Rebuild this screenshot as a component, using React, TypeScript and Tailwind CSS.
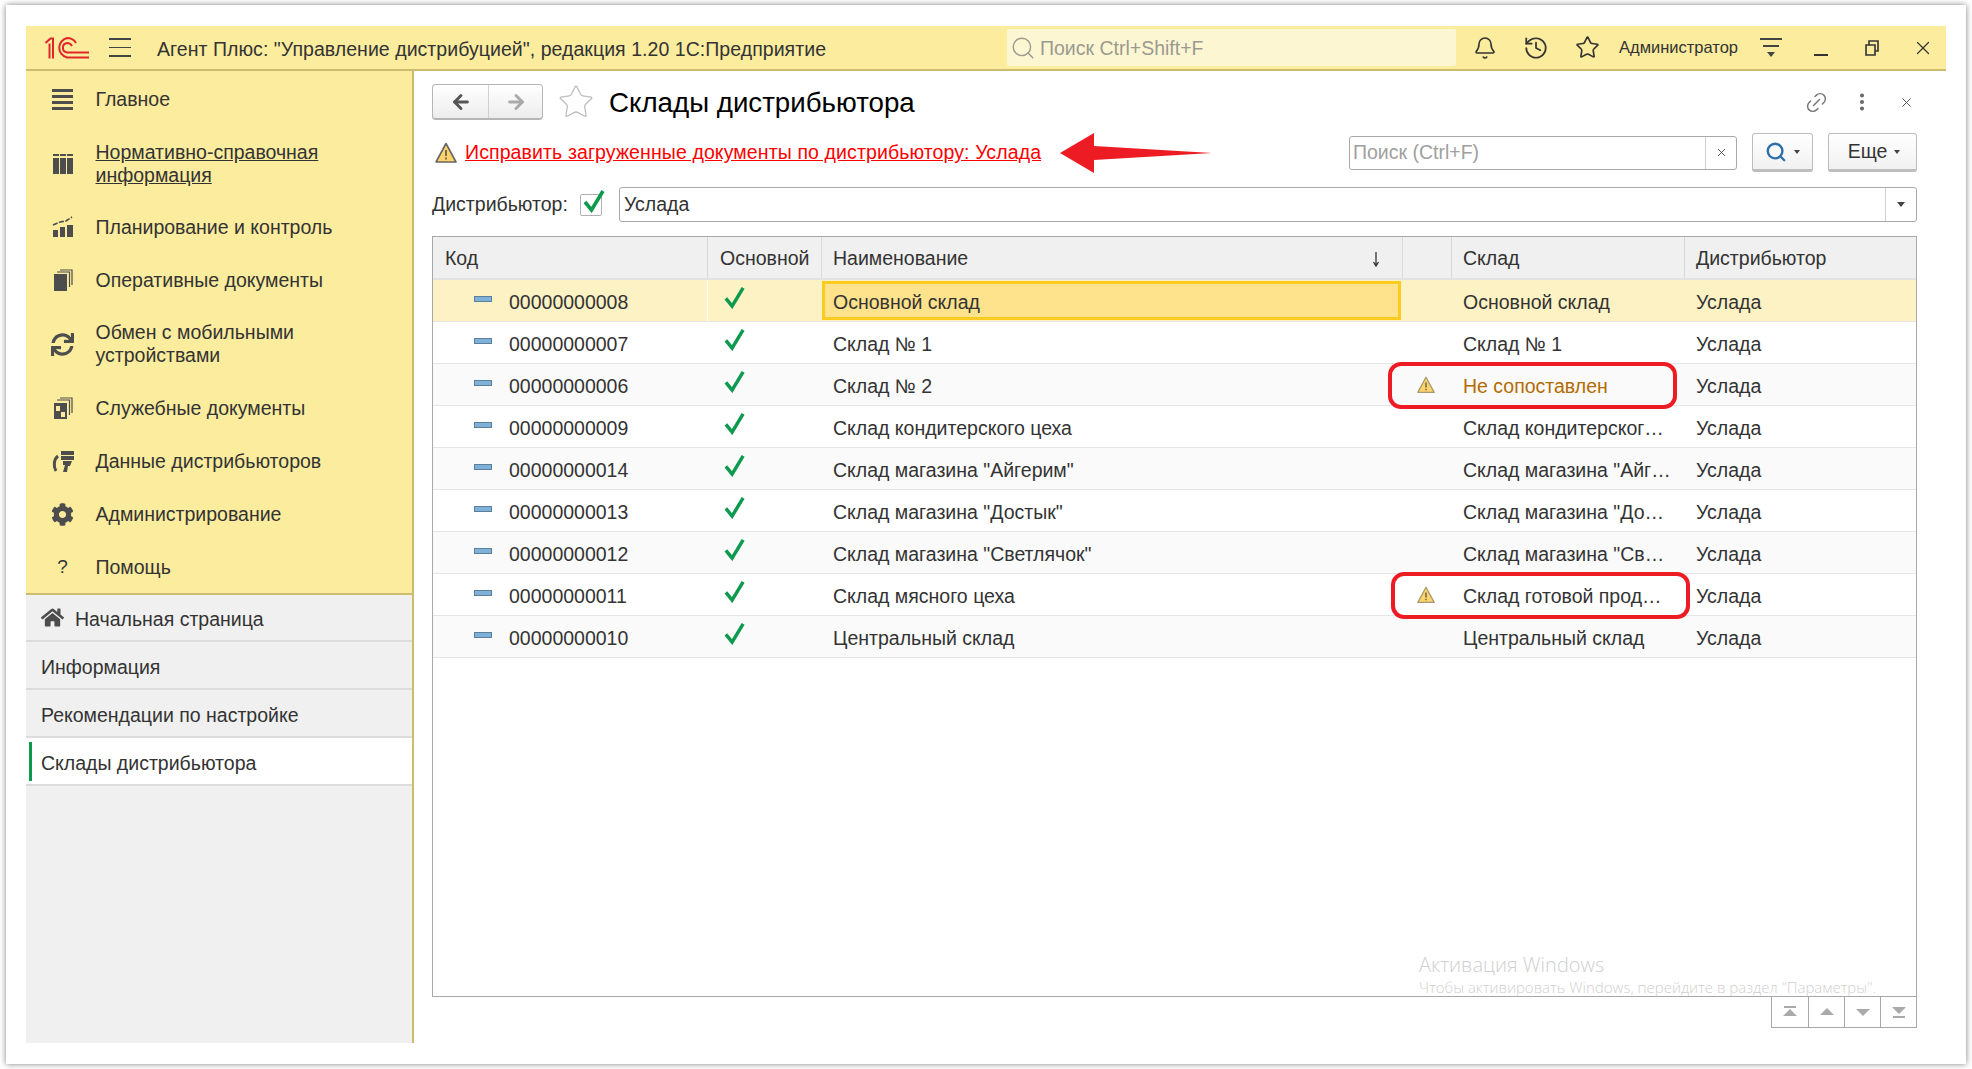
import React from 'react';
import { Bell, History, Star, Link2, X, Search, MoreVertical, ArrowLeft, ArrowRight } from 'lucide-react';
import { FaCog, FaHome, FaSync } from 'react-icons/fa';

const Warn = ({ size = 22, stroke = '#666' }: { size?: number; stroke?: string }) => (
  <svg width={size} height={size} viewBox="0 0 22 22" className="shrink-0">
    <path d="M11 1.5 L21 20 H1 Z" fill="#fdd36a" stroke={stroke} strokeWidth="1.6" strokeLinejoin="round" />
    <path d="M11 8 V14" stroke="#555" strokeWidth="1.6" />
    <path d="M11 15.5 V17.5" stroke="#555" strokeWidth="1.6" />
  </svg>
);

const Logo = () => (
  <svg width="44" height="22" viewBox="0 0 44 22" fill="none" stroke="#e0262b" strokeWidth="2" className="shrink-0">
    <path d="M0.5 6 L5.5 1.5 H8 V21.5 M4.5 21.5 V6.5" />
    <path d="M31 6 C29 2.5 25.5 1 22 1 A10 10 0 0 0 22 20.5 H44" />
    <path d="M27 9 C26 7 24 6 22 6 A4.8 4.8 0 0 0 22 15.5 H44" />
  </svg>
);

const IconMenu = () => (
  <div className="flex flex-col gap-[3px] w-[21px]">
    <div className="h-[3px] bg-[#4d4d4d]" />
    <div className="h-[3px] bg-[#4d4d4d]" />
    <div className="h-[3px] bg-[#4d4d4d]" />
    <div className="h-[3px] bg-[#4d4d4d]" />
  </div>
);

const IconTable = () => (
  <svg width="22" height="22" viewBox="0 0 22 22" fill="#4d4d4d">
    <path d="M1 1h6v2H1zM8 1h6v2H8zM15 1h6v2h-6z" />
    <path d="M1 5h6v16H1zM8 5h6v16H8zM15 5h6v16h-6z" />
  </svg>
);

const IconPlan = () => (
  <svg width="22" height="22" viewBox="0 0 22 22" fill="#4d4d4d">
    <path d="M1 14h5v7H1zM8 11h5v10H8zM15 9h6v12h-6z" />
    <path d="M1 9 L8 6 L14 5 L20 1" fill="none" stroke="#4d4d4d" strokeWidth="1.6" strokeDasharray="5 1.5" />
  </svg>
);

const IconDocs = () => (
  <svg width="20" height="22" viewBox="0 0 20 22" fill="#4d4d4d">
    <path d="M1 5h13v17H1z" />
    <path d="M4 3h12.5v15M7 1h12v15" fill="none" stroke="#4d4d4d" strokeWidth="1.2" />
  </svg>
);

const IconService = () => (
  <svg width="20" height="22" viewBox="0 0 20 22" fill="#4d4d4d">
    <path fillRule="evenodd" d="M1 6h13v16H1z M3 9v5h4V9z M8 15v5h4v-5z" />
    <path d="M4 3h12.5v15M7 1h12v15" fill="none" stroke="#4d4d4d" strokeWidth="1.2" />
  </svg>
);

const IconData = () => (
  <svg width="24" height="24" viewBox="0 0 24 24" fill="#4d4d4d">
    <path d="M10 2h13v4H10zM10 7h13v4H10z" />
    <path d="M12 12h9l-2 5h-2l-1 6h-4l2-7h-2z" />
    <path d="M7 7 C3 10 2 17 5 22" fill="none" stroke="#4d4d4d" strokeWidth="3" />
  </svg>
);

const navItems = [
  { icon: <IconMenu />, label: 'Главное', h: 'h-[54px]' },
  { icon: <IconTable />, label: 'Нормативно-справочная информация', link: true, h: 'h-[74px]' },
  { icon: <IconPlan />, label: 'Планирование и контроль', h: 'h-[53px]' },
  { icon: <IconDocs />, label: 'Оперативные документы', h: 'h-[53px]' },
  { icon: <FaSync size={23} color="#4d4d4d" />, label: 'Обмен с мобильными устройствами', h: 'h-[75px]' },
  { icon: <IconService />, label: 'Служебные документы', h: 'h-[53px]' },
  { icon: <IconData />, label: 'Данные дистрибьюторов', h: 'h-[53px]' },
  { icon: <FaCog size={23} color="#4d4d4d" />, label: 'Администрирование', h: 'h-[53px]' },
  { icon: <span className="text-[#333] text-[19px]">?</span>, label: 'Помощь', h: 'h-[53px]' },
];

const rows = [
  { code: '00000000008', name: 'Основной склад', sklad: 'Основной склад' },
  { code: '00000000007', name: 'Склад № 1', sklad: 'Склад № 1' },
  { code: '00000000006', name: 'Склад № 2', sklad: 'Не сопоставлен', warn: true, bad: true },
  { code: '00000000009', name: 'Склад кондитерского цеха', sklad: 'Склад кондитерског…' },
  { code: '00000000014', name: 'Склад магазина "Айгерим"', sklad: 'Склад магазина "Айг…' },
  { code: '00000000013', name: 'Склад магазина "Достык"', sklad: 'Склад магазина "До…' },
  { code: '00000000012', name: 'Склад магазина "Светлячок"', sklad: 'Склад магазина "Св…' },
  { code: '00000000011', name: 'Склад мясного цеха', sklad: 'Склад готовой прод…', warn: true },
  { code: '00000000010', name: 'Центральный склад', sklad: 'Центральный склад' },
];

const Check = ({ size = 24 }: { size?: number }) => (
  <svg width={size} height={size} viewBox="0 0 24 24" fill="none" stroke="#0d9a4e" strokeWidth="3.6">
    <path d="M3 13 L9.5 21 L21 2" />
  </svg>
);

const colCls = 'grid grid-cols-[275px_114px_581px_49px_233px_1fr]';

export default function App() {
  return (
    <div className="w-[1972px] h-[1069px] bg-white pt-[5px] pl-[6px] pr-[6px] pb-[5px] overflow-hidden font-['Liberation_Sans',sans-serif] text-[19.5px] text-[#333]">
      <div className="h-full bg-white shadow-[0_0_6px_rgba(0,0,0,0.5)] pt-[21px] pl-[20px] pr-[20px] pb-[21px] flex flex-col">
        {/* top bar */}
        <div className="h-[45px] shrink-0 bg-[#fbec9e] border-b-2 border-[#cdbb6e] flex items-center">
          <div className="ml-[19px]"><Logo /></div>
          <div className="ml-[20px] w-[22px] flex flex-col gap-[7px]">
            <div className="h-[1.5px] bg-[#444]" />
            <div className="h-[1.5px] bg-[#444]" />
            <div className="h-[1.5px] bg-[#444]" />
          </div>
          <div className="ml-[26px] w-[850px] whitespace-nowrap pt-[5px] tracking-[0.05px]">Агент Плюс: "Управление дистрибуцией", редакция 1.20 1С:Предприятие</div>
          <div className="w-[449px] h-[37px] bg-[#fdf6d2] rounded-[2px] flex items-center pl-[3px] text-[#9a9a90]">
            <Search size={26} strokeWidth={1.3} />
            <span className="ml-[4px] pt-[3px]">Поиск Ctrl+Shift+F</span>
          </div>
          <Bell size={24} strokeWidth={1.6} className="ml-[17px] text-[#333]" />
          <History size={26} strokeWidth={1.6} className="ml-[26px] text-[#333]" />
          <Star size={25} strokeWidth={1.6} className="ml-[26px] text-[#333]" />
          <span className="ml-[19px] text-[16.5px] w-[125px] whitespace-nowrap">Администратор</span>
          <div className="ml-[16px] w-[22px] flex flex-col items-stretch gap-[5px]">
            <div className="h-[2px] bg-[#444]" />
            <div className="h-[2px] mx-[3px] bg-[#444]" />
            <div className="mx-auto border-x-[4px] border-x-transparent border-t-[5px] border-t-[#444]" />
          </div>
          <div className="ml-[32px] w-[14px] h-[2px] mt-[14px] bg-[#333]" />
          <svg width="14" height="16" viewBox="0 0 14 16" fill="none" stroke="#333" strokeWidth="1.6" className="ml-[37px]">
            <path d="M1 5h9v10H1zM4 5V1h9v10h-3" />
          </svg>
          <X size={22} strokeWidth={1.3} className="ml-[33px] text-[#333]" />
        </div>

        <div className="flex flex-1 min-h-0">
          {/* sidebar */}
          <div className="w-[388px] shrink-0 border-r-2 border-[#cdbb6e] bg-[#f0f0f0] flex flex-col">
            <div className="h-[524px] shrink-0 bg-[#fbec9e] border-b-2 border-[#cdbb6e] pt-[1.5px]">
              {navItems.map((it) => (
                <div key={it.label} className={`flex items-center ${it.h}`}>
                  <div className="w-[72px] pl-[1px] flex justify-center shrink-0">{it.icon}</div>
                  <div className={`w-[280px] leading-[23px] -ml-[2.5px] ${it.link ? 'underline' : ''}`}>{it.label}</div>
                </div>
              ))}
            </div>
            <div className="h-[47px] flex items-center border-b-2 border-[#dcdcdc] pl-[15px]">
              <FaHome size={23} color="#4d4d4d" />
              <span className="ml-[11px] pt-[4px]">Начальная страница</span>
            </div>
            <div className="h-[48px] flex items-center border-b-2 border-[#dcdcdc] pl-[15px] pt-[5px]">Информация</div>
            <div className="h-[48px] flex items-center border-b-2 border-[#dcdcdc] pl-[15px] pt-[5px]">Рекомендации по настройке</div>
            <div className="h-[48px] flex items-center border-b-2 border-[#dcdcdc] pl-[15px] pt-[5px] bg-white relative">
              <div className="absolute left-[3px] top-[4px] bottom-[3px] w-[3px] bg-[#0d9a4e]" />
              Склады дистрибьютора
            </div>
          </div>

          {/* content */}
          <div className="flex-1 min-w-0 pl-[18px] pr-[29px] pt-[13px] flex flex-col">
            <div className="flex items-center h-[36px] shrink-0">
              <div className="w-[111px] h-[36px] rounded-[4px] border border-[#b5b5b5] border-b-2 bg-linear-to-b from-white to-[#ededed] flex items-center">
                <div className="w-[56px] h-full flex items-center justify-center border-r border-[#d0d0d0]">
                  <ArrowLeft size={22} strokeWidth={3.2} className="text-[#555]" />
                </div>
                <div className="flex-1 flex items-center justify-center">
                  <ArrowRight size={22} strokeWidth={3.2} className="text-[#aaa]" />
                </div>
              </div>
              <Star size={38} strokeWidth={0.8} className="ml-[14px] text-[#bdbdbd]" />
              <div className="ml-[14px] text-[27.7px] text-black whitespace-nowrap pt-[1px]">Склады дистрибьютора</div>
              <div className="flex-1" />
              <Link2 size={25} strokeWidth={1.4} className="text-[#777] -rotate-45" />
              <MoreVertical size={22} strokeWidth={2.4} className="ml-[22px] text-[#666]" />
              <X size={15} strokeWidth={1.6} className="ml-[26px] mr-[3px] text-[#555]" />
            </div>

            <div className="flex items-center h-[39px] mt-[13px] shrink-0 relative">
              <div className="ml-[3px]"><Warn /></div>
              <a className="ml-[8px] pt-[1px] text-[#ff0000] underline whitespace-nowrap tracking-[0.11px]">Исправить загруженные документы по дистрибьютору: Услада</a>
              <svg width="154" height="42" viewBox="0 0 154 42" className="absolute left-[628px] top-[-1px]">
                <path d="M0 21 L34 1 V14 L152 21 L34 28 V41 Z" fill="#ed1c24" />
              </svg>
              <div className="flex-1" />
              <div className="w-[388px] h-[34px] border border-[#a9a9a9] rounded-[3px] flex items-center">
                <span className="flex-1 pl-[3px] text-[#a0a0a0]">Поиск (Ctrl+F)</span>
                <div className="w-[31px] h-full border-l border-[#cfcfcf] flex items-center justify-center">
                  <X size={13} strokeWidth={1.8} className="text-[#555]" />
                </div>
              </div>
              <div className="ml-[15px] w-[61px] h-[39px] rounded-[3px] border border-[#bdbdbd] border-b-[3px] bg-linear-to-b from-white to-[#f1f1f1] flex items-center justify-center gap-[7px]">
                <Search size={22} strokeWidth={2.6} className="text-[#2f6fa8]" />
                <div className="border-x-[3.5px] border-x-transparent border-t-[4px] border-t-[#444]" />
              </div>
              <div className="ml-[15px] w-[89px] h-[39px] rounded-[3px] border border-[#bdbdbd] border-b-[3px] bg-linear-to-b from-white to-[#f1f1f1] flex items-center justify-center gap-[7px] pl-[3px]">
                Еще
                <div className="border-x-[3.5px] border-x-transparent border-t-[4px] border-t-[#444]" />
              </div>
            </div>

            <div className="flex items-center h-[35px] mt-[15px] shrink-0">
              <span className="w-[148px] whitespace-nowrap">Дистрибьютор:</span>
              <div className="w-[22px] h-[22px] border border-[#b0b0b0] rounded-[2px] relative">
                <div className="absolute left-[1px] -top-[6px]"><Check size={24} /></div>
              </div>
              <div className="ml-[17px] flex-1 h-[35px] border border-[#a9a9a9] rounded-[3px] flex items-center">
                <span className="flex-1 pl-[4px]">Услада</span>
                <div className="w-[31px] h-full border-l border-[#cfcfcf] flex items-center justify-center">
                  <div className="border-x-[4px] border-x-transparent border-t-[5px] border-t-[#444]" />
                </div>
              </div>
            </div>

            {/* table */}
            <div className="mt-[14px] h-[761px] shrink-0 border border-[#a8a8a8] relative flex flex-col">
              <div className={`${colCls} h-[43px] bg-[#f0f0f0] border-b-2 border-[#e2e2e2]`}>
                <div className="pl-[12px] pt-[2px] flex items-center border-r border-[#d9d9d9]">Код</div>
                <div className="pl-[12px] pt-[2px] flex items-center border-r border-[#d9d9d9]">Основной</div>
                <div className="pl-[11px] pt-[2px] pr-[22px] flex items-center justify-between border-r border-[#d9d9d9]">
                  Наименование
                  <svg width="8" height="16" viewBox="0 0 8 16" fill="none" stroke="#333" strokeWidth="1.3"><path d="M4 1v13M1.5 11 4 15 6.5 11" /></svg>
                </div>
                <div className="border-r border-[#d9d9d9]" />
                <div className="pl-[11px] pt-[2px] flex items-center border-r border-[#d9d9d9]">Склад</div>
                <div className="pl-[11px] pt-[2px] flex items-center">Дистрибьютор</div>
              </div>
              {rows.map((r, i) => {
                const sel = i === 0;
                const bg = sel ? 'bg-[#fdf2c4]' : i % 2 === 0 ? 'bg-[#fafafa]' : 'bg-white';
                return (
                  <div key={r.code} className={`${colCls} h-[42px] shrink-0 border-b border-[#e6e6e6] ${bg}`}>
                    <div className={`flex items-center pl-[41px] ${sel ? 'border-r border-white' : ''}`}>
                      <div className="w-[18px] h-[6px] bg-[#7fb0d8] border border-[#5b7f9e] mb-[3px]" />
                      <span className="ml-[17px] pt-[4px]">{r.code}</span>
                    </div>
                    <div className="flex items-center pl-[15px] pb-[6px]"><Check size={23} /></div>
                    {sel ? (
                      <div className="flex items-center pl-[8px] pt-[4px] bg-[#fee28c] border-[3px] border-[#fbcc1f] my-[1px] mr-[2px]">{r.name}</div>
                    ) : (
                      <div className="flex items-center pl-[11px] pt-[4px]">{r.name}</div>
                    )}
                    <div className="flex items-center justify-center pr-[3px]">{r.warn && <Warn size={18} stroke="#a89a70" />}</div>
                    <div className={`flex items-center pl-[11px] pt-[4px] whitespace-nowrap ${r.bad ? 'text-[#b36b00]' : ''}`}>{r.sklad}</div>
                    <div className="flex items-center pl-[11px] pt-[4px]">Услада</div>
                  </div>
                );
              })}
              {/* red marks on the shot */}
              <div className="absolute left-[955px] top-[125px] w-[289px] h-[47px] border-[4px] border-[#ed1c24] rounded-[13px]" />
              <div className="absolute left-[958px] top-[335px] w-[299px] h-[47px] border-[4px] border-[#ed1c24] rounded-[13px]" />
              {/* windows watermark */}
              <div className="absolute left-[986px] top-[713px] text-[20px] text-[#cfcfcf] font-['Open_Sans',sans-serif] font-light whitespace-nowrap">Активация Windows</div>
              <div className="absolute left-[986px] top-[739px] text-[15px] text-[#cfcfcf] font-['Open_Sans',sans-serif] font-light whitespace-nowrap">Чтобы активировать Windows, перейдите в раздел "Параметры".</div>
            </div>
            <div className="flex justify-end shrink-0">
              <div className="flex h-[31px] border border-t-0 border-[#a8a8a8] text-[#aaa]">
                {[
                  'M3 2h12v2H3zM9 5 L16 12 H2 Z',
                  'M9 4 L16 11 H2 Z',
                  'M2 5 H16 L9 12 Z',
                  'M2 3 H16 L9 10 Z M3 12h12v2H3z',
                ].map((d, i) => (
                  <div key={d} className={`w-[36px] flex items-center justify-center ${i > 0 ? 'border-l border-[#a8a8a8]' : ''}`}>
                    <svg width="18" height="16" viewBox="0 0 18 16" fill="currentColor"><path d={d} /></svg>
                  </div>
                ))}
              </div>
            </div>
          </div>
        </div>
      </div>
    </div>
  );
}
